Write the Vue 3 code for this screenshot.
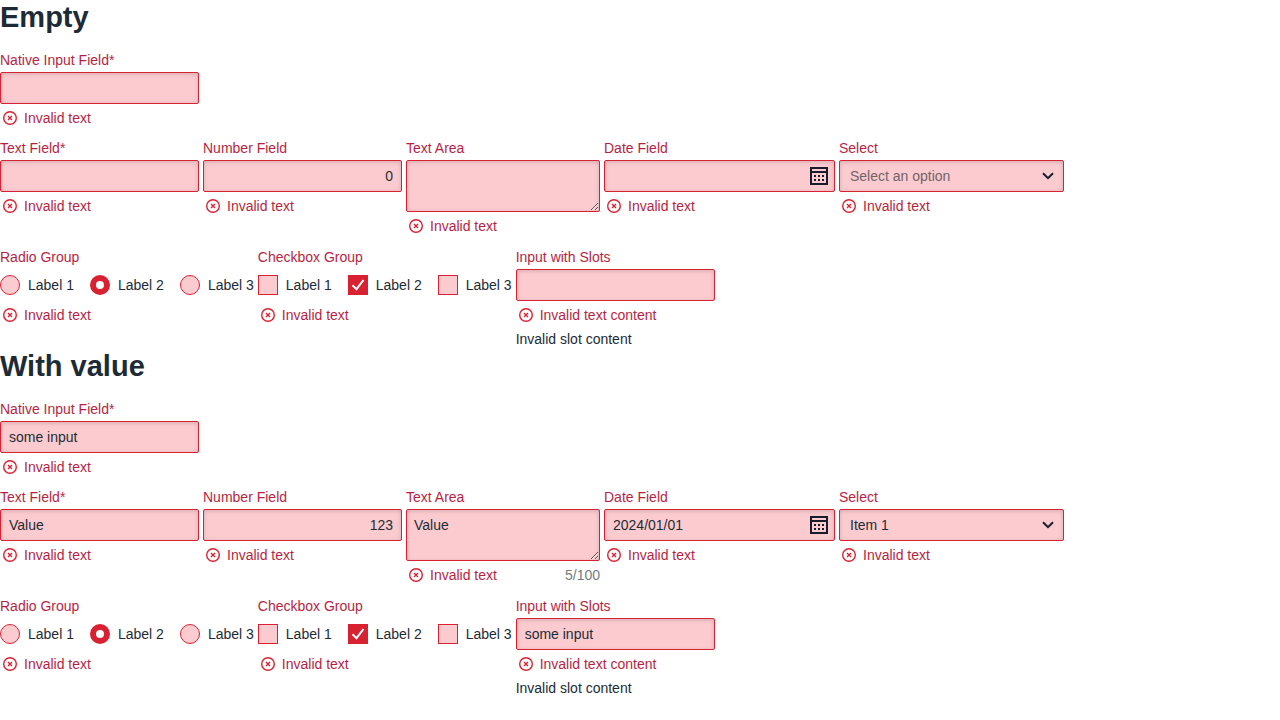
<script setup>
import { h, reactive } from 'vue'

const ErrorMessage = (props) =>
  h('div', { class: 'message' }, [
    h('svg', { class: 'message-icon', viewBox: '0 0 20 20', 'aria-hidden': 'true' }, [
      h('circle', { cx: 10, cy: 10, r: 6.3 }),
      h('path', { d: 'M8 8l4 4M12 8l-4 4' })
    ]),
    h('span', props.text)
  ])
ErrorMessage.props = ['text']

const sections = reactive([
  {
    id: 'empty', title: 'Empty', native: '', text: '', number: 0,
    area: '', date: '', select: '', slots: '', radio: 2, checks: [2]
  },
  {
    id: 'filled', title: 'With value', native: 'some input', text: 'Value', number: 123,
    area: 'Value', date: '2024/01/01', select: 'Item 1', slots: 'some input', radio: 2, checks: [2]
  }
])
</script>

<template>
  <main class="page">
    <section v-for="s in sections" :key="s.id">
      <h1>{{ s.title }}</h1>

      <div class="row">
        <div class="field">
          <label :for="s.id + '-native'">Native Input Field*</label>
          <input :id="s.id + '-native'" v-model="s.native" class="box" type="text">
          <ErrorMessage text="Invalid text" />
        </div>
      </div>

      <div class="row row-main">
        <div class="field">
          <label :for="s.id + '-text'">Text Field*</label>
          <input :id="s.id + '-text'" v-model="s.text" class="box" type="text">
          <ErrorMessage text="Invalid text" />
        </div>
        <div class="field">
          <label :for="s.id + '-number'">Number Field</label>
          <input :id="s.id + '-number'" v-model="s.number" class="box number" type="number">
          <ErrorMessage text="Invalid text" />
        </div>
        <div class="field field-area">
          <label :for="s.id + '-area'">Text Area</label>
          <textarea :id="s.id + '-area'" v-model="s.area" class="box area" maxlength="100"></textarea>
          <div class="message-row">
            <ErrorMessage text="Invalid text" />
            <span v-if="s.area" class="counter">{{ s.area.length }}/100</span>
          </div>
        </div>
        <div class="field field-date">
          <label :for="s.id + '-date'">Date Field</label>
          <div class="control">
            <input :id="s.id + '-date'" v-model="s.date" class="box" type="text">
            <button class="calendar" type="button" aria-label="Open calendar">
              <svg viewBox="0 0 18 18" shape-rendering="crispEdges" aria-hidden="true">
                <path fill-rule="evenodd" d="M0 0h18v18H0zM2 2v2h14V2zM2 6v10h14V6z" />
                <path d="M4 8h2v2H4zM8 8h2v2H8zM12 8h2v2h-2zM4 12h2v2H4zM8 12h2v2H8zM12 12h2v2h-2z" />
              </svg>
            </button>
          </div>
          <ErrorMessage text="Invalid text" />
        </div>
        <div class="field field-select">
          <label :for="s.id + '-select'">Select</label>
          <div class="control">
            <select :id="s.id + '-select'" v-model="s.select" class="box" :class="{ placeholder: !s.select }">
              <option value="" disabled hidden>Select an option</option>
              <option>Item 1</option>
              <option>Item 2</option>
            </select>
            <svg class="chevron" viewBox="0 0 12 8" aria-hidden="true"><path d="M1 1.2l5 5 5-5" /></svg>
          </div>
          <ErrorMessage text="Invalid text" />
        </div>
      </div>

      <div class="row">
        <fieldset class="field">
          <legend>Radio Group</legend>
          <div class="options">
            <label v-for="n in 3" :key="n" class="option">
              <input v-model="s.radio" class="radio" type="radio" :name="s.id + '-radio'" :value="n">
              <span>Label {{ n }}</span>
            </label>
          </div>
          <ErrorMessage text="Invalid text" />
        </fieldset>
        <fieldset class="field">
          <legend>Checkbox Group</legend>
          <div class="options">
            <label v-for="n in 3" :key="n" class="option">
              <input v-model="s.checks" class="check" type="checkbox" :value="n">
              <svg class="tick" viewBox="0 0 20 20" aria-hidden="true"><path d="M4.5 10.2l4 4 7-9.2" /></svg>
              <span>Label {{ n }}</span>
            </label>
          </div>
          <ErrorMessage text="Invalid text" />
        </fieldset>
        <div class="field">
          <label :for="s.id + '-slots'">Input with Slots</label>
          <input :id="s.id + '-slots'" v-model="s.slots" class="box" type="text">
          <ErrorMessage text="Invalid text content" />
          <div class="slot-text">Invalid slot content</div>
        </div>
      </div>
    </section>
  </main>
</template>

<style>
body {
  margin: 0;
  background: #fff;
}
.message {
  display: flex;
  align-items: center;
  gap: 4px;
  height: 24px;
  color: #b71f42;
}
.message-icon {
  width: 20px;
  height: 20px;
  fill: none;
  stroke: #d92231;
  stroke-width: 1.4;
}
</style>

<style scoped>
.page {
  font: 14px/20px "Liberation Sans", Arial, sans-serif;
  color: #1c2b36;
}
h1 {
  margin: 0 0 16px;
  font-size: 29px;
  line-height: 34px;
  font-weight: 700;
}
.row {
  display: flex;
  align-items: flex-start;
  gap: 4px;
  margin-bottom: 8px;
}
.row-main {
  margin-bottom: 9px;
}
.row:last-child {
  margin-bottom: 0;
}
.field {
  display: flex;
  flex-direction: column;
  gap: 2px;
  min-width: 0;
  margin: 0;
  padding: 0;
  border: 0;
}
.field > label,
legend {
  padding: 0;
  color: #b71f42;
}
legend {
  margin-bottom: 2px;
}
.box {
  display: block;
  box-sizing: border-box;
  width: 199px;
  height: 32px;
  margin: 0;
  padding: 0 8px;
  border: 1px solid #d92231;
  border-radius: 2px;
  outline: 0;
  appearance: none;
  background: #fccbcf;
  box-shadow: inset 0 1px 4px rgb(28 43 54 / 20%);
  color: #1c2b36;
  font: inherit;
}
.number {
  text-align: right;
  appearance: textfield;
}
.number::-webkit-inner-spin-button,
.number::-webkit-outer-spin-button {
  margin: 0;
  appearance: none;
}
.area {
  width: 100%;
  height: 52px;
  padding: 5px 7px;
  resize: both;
}
.field-area {
  width: 194px;
}
.field-date {
  width: 231px;
}
.field-select {
  width: 225px;
}
.control {
  position: relative;
}
.control .box {
  width: 100%;
}
select.box {
  padding: 0 32px 0 10px;
}
select.placeholder {
  color: #71636c;
}
.calendar {
  position: absolute;
  top: 7px;
  right: 7px;
  width: 18px;
  height: 18px;
  padding: 0;
  border: 0;
  background: none;
  color: #171d2b;
}
.calendar svg {
  display: block;
  fill: currentColor;
}
.chevron {
  position: absolute;
  top: 12px;
  right: 10px;
  width: 12px;
  height: 8px;
  fill: none;
  stroke: #171d2b;
  stroke-width: 2;
  pointer-events: none;
}
.message-row {
  display: flex;
  align-items: center;
  justify-content: space-between;
}
.counter {
  color: #737b80;
}
.options {
  display: flex;
  gap: 16px;
  height: 32px;
}
.option {
  position: relative;
  display: flex;
  align-items: center;
  gap: 8px;
  white-space: nowrap;
}
.radio,
.check {
  box-sizing: border-box;
  width: 20px;
  height: 20px;
  margin: 0;
  border: 1px solid #d92231;
  appearance: none;
  background: #fccbcf;
}
.radio {
  border-radius: 50%;
}
.radio:checked {
  border-width: 6px;
  background: #fff;
}
.check:checked {
  background: #d92231;
}
.tick {
  display: none;
  position: absolute;
  left: 0;
  top: 6px;
  width: 20px;
  height: 20px;
  fill: none;
  stroke: #fff;
  stroke-width: 2;
  pointer-events: none;
}
.check:checked + .tick {
  display: block;
}
</style>
